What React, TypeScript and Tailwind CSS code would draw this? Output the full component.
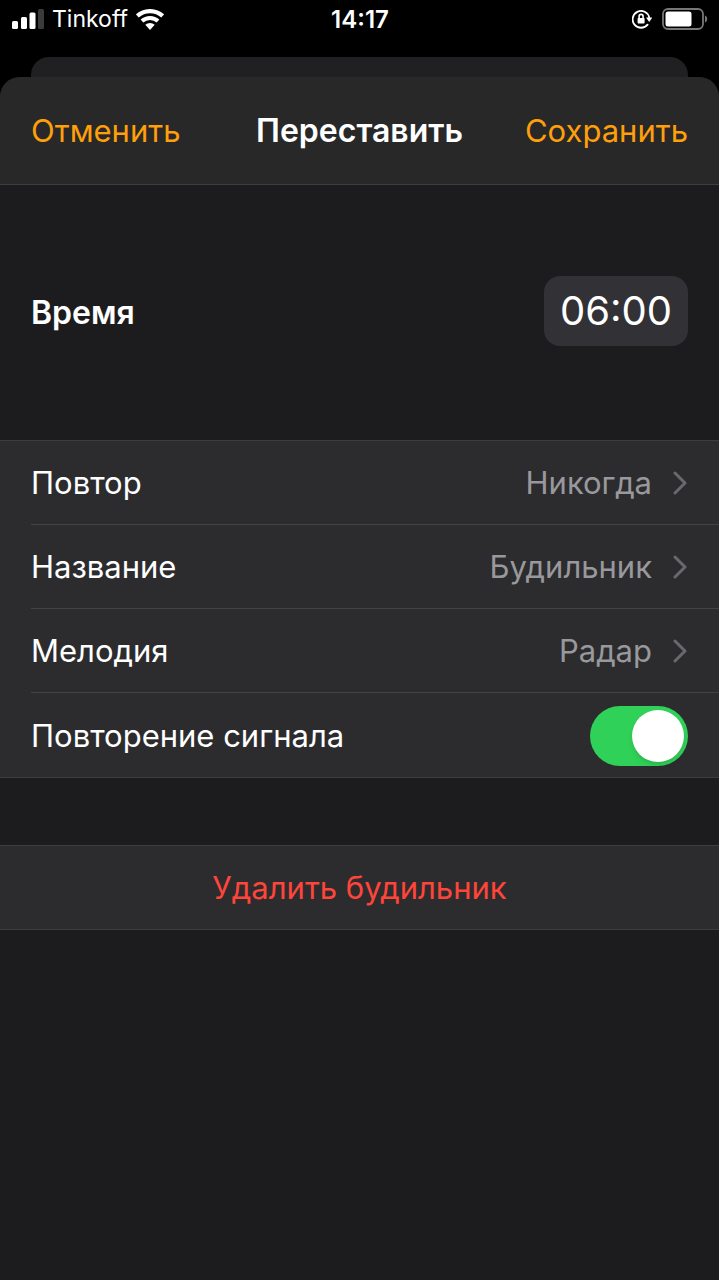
import { useState } from "react";

type Option = {
  label: string;
  value: string;
};

const options: Option[] = [
  { label: "Повтор", value: "Никогда" },
  { label: "Название", value: "Будильник" },
  { label: "Мелодия", value: "Радар" },
];

function SignalIcon() {
  return (
    <svg className="w-8 h-5" viewBox="0 0 32 20" aria-hidden="true">
      <rect x="0" y="12" width="6" height="8" rx="1.5" fill="#fff" />
      <rect x="9" y="8" width="6" height="12" rx="1.5" fill="#fff" />
      <rect x="17.5" y="3.5" width="6" height="16.5" rx="1.5" fill="#fff" />
      <rect x="26" y="0" width="6" height="20" rx="1.5" fill="#3a3a3c" />
    </svg>
  );
}

function WifiIcon() {
  return (
    <svg className="w-7 h-[21px]" viewBox="0 0 28 21" fill="none" aria-hidden="true">
      <path d="M1.35 6.95a18.9 18.9 0 0 1 25.3 0" stroke="#fff" strokeWidth="4.2" />
      <path d="M5.97 12.08a12 12 0 0 1 16.06 0" stroke="#fff" strokeWidth="4" />
      <path d="M14 21l-4.7-5.2a7 7 0 0 1 9.4 0z" fill="#fff" />
    </svg>
  );
}

function RotationLockIcon() {
  return (
    <svg className="w-5 h-5" viewBox="0 0 20 20" fill="none" aria-hidden="true">
      <path d="M15.6 15.6A8.4 8.4 0 1 1 17.2 8.4" stroke="#fff" strokeWidth="1.8" strokeLinecap="round" />
      <path d="M14 8.6h6.2L17.2 13z" fill="#fff" />
      <rect x="5.6" y="9" width="7" height="5.6" rx="0.8" fill="#fff" />
      <path d="M7.1 9.4V7.4a2 2 0 0 1 4 0v2" stroke="#fff" strokeWidth="1.6" />
    </svg>
  );
}

function BatteryIcon() {
  return (
    <svg className="w-[46px] h-[22px]" viewBox="0 0 46 22" fill="none" aria-hidden="true">
      <rect x="1" y="1" width="40" height="20" rx="5" stroke="#77777a" strokeWidth="1.8" />
      <rect x="3.5" y="3.5" width="26" height="15" rx="2.5" fill="#fff" />
      <path d="M43 7.5c1.6.6 2.2 2 2.2 3.5s-.6 2.9-2.2 3.5z" fill="#77777a" />
    </svg>
  );
}

function Chevron() {
  return (
    <svg className="w-4 h-6" viewBox="0 0 16 24" fill="none" aria-hidden="true">
      <path d="M3 2l10 10L3 22" stroke="#69696d" strokeWidth="3" strokeLinecap="round" strokeLinejoin="round" />
    </svg>
  );
}

export default function App() {
  const [snooze, setSnooze] = useState(true);

  return (
    <div className="flex min-h-screen flex-col bg-black font-['Inter','Liberation_Sans',sans-serif] text-[31px] leading-10 text-white">
      <div className="grid h-[57px] grid-cols-3 items-start pt-1 pr-[11px] pl-3 text-[23px] leading-8">
        <div className="flex h-[30px] items-center gap-2">
          <SignalIcon />
          <span>Tinkoff</span>
          <WifiIcon />
        </div>
        <span className="text-center text-[24px] font-semibold">14:17</span>
        <div className="flex h-[30px] items-center justify-end gap-[10px]">
          <RotationLockIcon />
          <BatteryIcon />
        </div>
      </div>

      <div className="mx-[31px] h-5 rounded-t-[18px] bg-[#202022]" />

      <main className="flex flex-1 flex-col rounded-t-[20px] bg-[#1c1c1e]">
        <header className="grid h-[108px] grid-cols-[1fr_auto_1fr] items-center rounded-t-[20px] border-b border-[#3d3d40] bg-[#282829] px-[31px]">
          <button type="button" className="justify-self-start text-[#ff9f0a]">
            Отменить
          </button>
          <h1 className="text-[32px] font-semibold">Переставить</h1>
          <button type="button" className="justify-self-end text-[#ff9f0a]">
            Сохранить
          </button>
        </header>

        <section className="flex h-[255px] items-center justify-between px-[31px]">
          <h2 className="text-[32px] font-semibold">Время</h2>
          <button
            type="button"
            aria-label="Время 06:00"
            className="mb-[3px] h-[70px] rounded-2xl bg-[#323236] px-4 text-[40px]"
          >
            06:00
          </button>
        </section>

        <section className="border-y border-[#3d3d40] bg-[#2c2c2e] pl-[31px]">
          {options.map((option) => (
            <button
              key={option.label}
              type="button"
              className="flex h-[84px] w-full items-center border-b border-[#434346] pr-[31px]"
            >
              <span>{option.label}</span>
              <span className="ml-auto text-[#98989d]">{option.value}</span>
              <span className="ml-5">
                <Chevron />
              </span>
            </button>
          ))}
          <label className="flex h-[84px] items-center justify-between pt-0.5 pr-[31px]">
            <span>Повторение сигнала</span>
            <input
              type="checkbox"
              role="switch"
              checked={snooze}
              onChange={(e) => setSnooze(e.target.checked)}
              className="flex h-[60px] w-[98px] appearance-none items-center rounded-full bg-[#39393d] px-1 before:size-[52px] before:rounded-full before:bg-white before:shadow-md checked:justify-end checked:bg-[#30d158]"
            />
          </label>
        </section>

        <button
          type="button"
          className="mt-[67px] h-[85px] border-y border-[#3d3d40] bg-[#2c2c2e] text-[#ff453a]"
        >
          Удалить будильник
        </button>
      </main>
    </div>
  );
}
